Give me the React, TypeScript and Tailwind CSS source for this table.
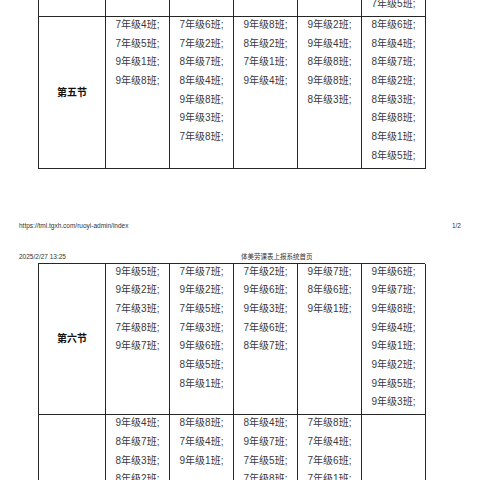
import React from "react";

type Row = {
    label?: string;
    cells: string[][];
    minH?: string;
};

const font = { fontFamily: '"Liberation Sans", "Noto Sans CJK SC", sans-serif' };

const row5: Row = {
    label: "第五节",
    cells: [
        ["7年级4班;", "7年级5班;", "9年级1班;", "9年级8班;"],
        ["7年级6班;", "7年级2班;", "8年级7班;", "8年级4班;", "9年级8班;", "9年级3班;", "7年级8班;"],
        ["9年级8班;", "8年级2班;", "7年级1班;", "9年级4班;"],
        ["9年级2班;", "9年级4班;", "8年级8班;", "9年级8班;", "8年级3班;"],
        ["8年级6班;", "8年级4班;", "8年级7班;", "8年级2班;", "8年级3班;", "8年级8班;", "8年级1班;", "8年级5班;"],
    ],
};

const row6: Row = {
    label: "第六节",
    cells: [
        ["9年级5班;", "9年级2班;", "7年级3班;", "7年级8班;", "9年级7班;"],
        ["7年级7班;", "9年级2班;", "7年级5班;", "7年级3班;", "9年级6班;", "8年级5班;", "8年级1班;"],
        ["7年级2班;", "9年级6班;", "9年级3班;", "7年级6班;", "8年级7班;"],
        ["9年级7班;", "8年级6班;", "9年级1班;"],
        ["9年级6班;", "9年级7班;", "9年级8班;", "9年级4班;", "9年级1班;", "9年级2班;", "9年级5班;", "9年级3班;"],
    ],
};

// next lesson row, only its top part is on screen
const row7: Row = {
    cells: [
        ["9年级4班;", "8年级7班;", "8年级3班;", "8年级2班;"],
        ["8年级8班;", "7年级4班;", "9年级1班;"],
        ["8年级4班;", "9年级7班;", "7年级5班;", "7年级8班;"],
        ["7年级8班;", "7年级4班;", "7年级6班;", "7年级1班;"],
        [],
    ],
};

const Cell: React.FC<{ items: string[] }> = ({ items }) => (
    <div className="border-r border-b border-[#262626] pt-[1px] pb-[5px] flex flex-col items-center gap-[4.67px]">
        {items.map((t, i) => (
            <div key={i} className="text-[10px] leading-[14px] text-[#3a3a3a]">
                {t}
            </div>
        ))}
    </div>
);

const TableRow: React.FC<{ row: Row }> = ({ row }) => (
    <>
        <div className={`border-r border-b border-[#262626] flex items-center justify-center ${row.minH ?? ""}`}>
            {row.label && <span className="text-[10px] font-bold text-[#111]">{row.label}</span>}
        </div>
        {row.cells.map((c, i) => (
            <Cell key={i} items={c} />
        ))}
    </>
);

const Table: React.FC<{ rows: Row[]; partialTop?: boolean; topBorder?: boolean }> = ({ rows, partialTop, topBorder }) => (
    <div
        className={`ml-[38px] w-[387px] grid grid-cols-[67px_64px_64px_64px_64px_64px] border-l border-[#262626] ${topBorder ? "border-t" : ""}`}
        style={font}
    >
        {partialTop && (
            <>
                <div className="h-[17px] border-r border-b border-[#262626]" />
                <div className="h-[17px] border-r border-b border-[#262626]" />
                <div className="h-[17px] border-r border-b border-[#262626]" />
                <div className="h-[17px] border-r border-b border-[#262626]" />
                <div className="h-[17px] border-r border-b border-[#262626]" />
                <div className="h-[17px] border-r border-b border-[#262626] flex justify-center items-end pb-[5px]">
                    <span className="text-[10px] leading-[14px] text-[#3a3a3a]">7年级5班;</span>
                </div>
            </>
        )}
        {rows.map((r, i) => (
            <TableRow key={i} row={r} />
        ))}
    </div>
);

export default function App() {
    return (
        <div className="w-[480px] h-[480px] overflow-hidden bg-white" style={font}>
            <Table rows={[row5]} partialTop />

            <div className="mt-[53px] px-[19px] flex justify-between text-[6.5px] leading-[8px] text-[#333]">
                <span>https://tml.tgxh.com/ruoyi-admin/index</span>
                <span>1/2</span>
            </div>

            <div className="mt-[23px] pl-[19px] flex text-[6.5px] leading-[8px] text-[#333]">
                <span className="w-[222px]">2025/2/27 13:25</span>
                <span>体美劳课表上报系统首页</span>
            </div>

            <div className="mt-[2px]">
                <Table rows={[row6, row7]} topBorder />
            </div>
        </div>
    );
}
